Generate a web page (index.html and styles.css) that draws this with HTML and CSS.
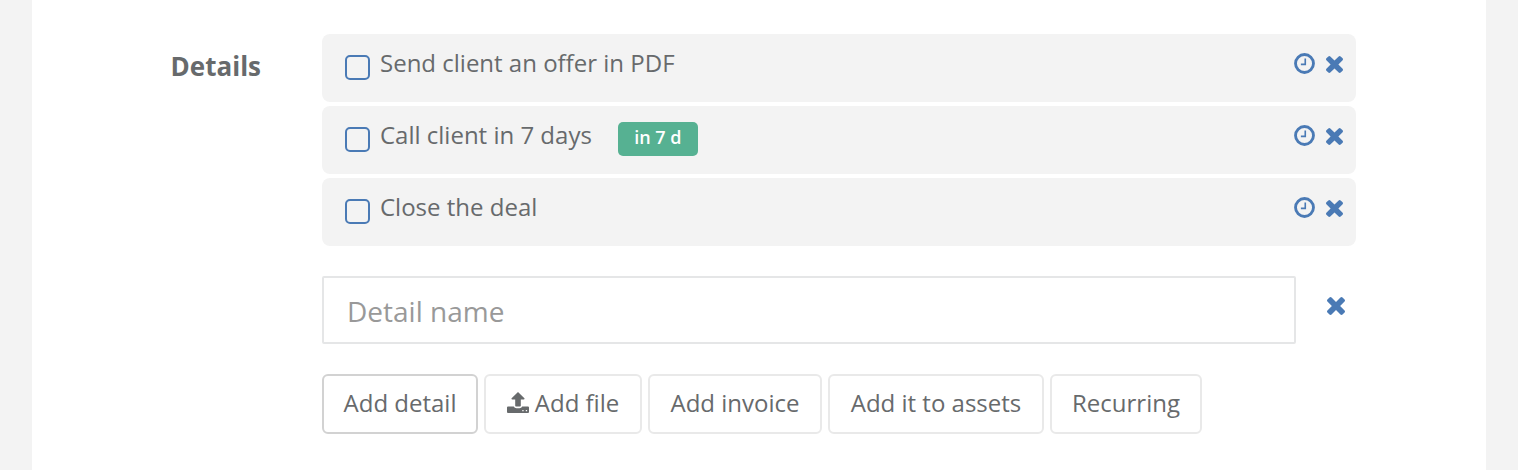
FILE: index.html
```html
<!DOCTYPE html>
<html lang="en">
<head>
    <meta charset="UTF-8">
    <title>Details</title>
    <link rel="stylesheet" href="styles.css">
</head>
<body>
    <svg class="sprite">
        <symbol id="clock" viewBox="0 0 22 22">
            <circle cx="11" cy="11" r="9.4" fill="none" stroke="currentColor" stroke-width="3"/>
            <path d="M11.8 5.800v6.100H7.200" fill="none" stroke="currentColor" stroke-width="1.700"/>
        </symbol>
        <symbol id="times" viewBox="110 -1170 1188 1188">
            <path transform="scale(1 -1)" fill="currentColor" d="M1298 214q0 -40 -28 -68l-136 -136q-28 -28 -68 -28t-68 28l-294 294l-294 -294q-28 -28 -68 -28t-68 28l-136 136q-28 28 -28 68t28 68l294 294l-294 294q-28 28 -28 68t28 68l136 136q28 28 68 28t68 -28l294 -294l294 294q28 28 68 28t68 -28l136 -136q28 -28 28 -68t-28 -68l-294 -294l294 -294q28 -28 28 -68z"/>
        </symbol>
    </svg>
    <div class="panel">
        <div class="label">Details</div>
        <div class="content">
            <ul class="tasks">
                <li class="task">
                    <span class="checkbox"></span>
                    <span class="task-text">Send client an offer in PDF</span>
                    <span class="actions">
                        <svg class="clock"><use href="#clock"/></svg>
                        <svg class="times"><use href="#times"/></svg>
                    </span>
                </li>
                <li class="task">
                    <span class="checkbox"></span>
                    <span class="task-text">Call client in 7 days</span>
                    <span class="badge">in 7 d</span>
                    <span class="actions">
                        <svg class="clock"><use href="#clock"/></svg>
                        <svg class="times"><use href="#times"/></svg>
                    </span>
                </li>
                <li class="task">
                    <span class="checkbox"></span>
                    <span class="task-text">Close the deal</span>
                    <span class="actions">
                        <svg class="clock"><use href="#clock"/></svg>
                        <svg class="times"><use href="#times"/></svg>
                    </span>
                </li>
            </ul>
            <div class="detail-row">
                <input type="text" class="detail-input" placeholder="Detail name">
                <svg class="times"><use href="#times"/></svg>
            </div>
            <div class="buttons">
                <button class="btn active">Add detail</button>
                <button class="btn file">
                    <svg class="upload" viewBox="0 0 22 21">
                        <path fill="currentColor" fill-rule="evenodd" d="M11 0l6.400 6.200q.5 1-.7 1.300H13.800v6.200q0 .8-.8.8H9q-.8 0-.8-.8V7.500H5.300q-1.200-.3-.7-1.300zM1 14.500h5.800q.7 1.700 2.700 1.700h3q2 0 2.700-1.700H21q1 0 1 1V20q0 1-1 1H1q-1 0-1-1v-4.500q0-1 1-1zM15.300 18v1.300h1.300V18zM18.800 18v1.300h1.300V18z"/>
                    </svg>Add file
                </button>
                <button class="btn invoice">Add invoice</button>
                <button class="btn assets">Add it to assets</button>
                <button class="btn recurring">Recurring</button>
            </div>
        </div>
    </div>
</body>
</html>
```
FILE: styles.css
```css
* {
    margin: 0;
    padding: 0;
    box-sizing: border-box;
}

body {
    background-color: #f3f3f3;
    color: #676a6c;
    font-family: "Open Sans", sans-serif;
    font-size: 24px;
}

.sprite {
    display: none;
}

.panel {
    display: flex;
    height: 470px;
    margin: 0 32px;
    padding-top: 34px;
    background-color: #fff;
}

.label {
    width: 290px;
    padding: 14px 61px 0 0;
    font-size: 26px;
    font-weight: 700;
    line-height: 36px;
    text-align: right;
}

.content {
    width: 1034px;
}

.tasks {
    display: flex;
    flex-direction: column;
    gap: 4px;
    list-style: none;
}

.task {
    display: flex;
    height: 68px;
    padding: 0 13px 0 23px;
    background-color: #f3f3f3;
    border-radius: 8px;
}

.checkbox {
    width: 25px;
    height: 25px;
    margin: 21px 10px 0 0;
    border: 2px solid #4a7ab5;
    border-radius: 5px;
}

.task-text {
    padding-top: 12px;
    line-height: 34px;
}

.badge {
    width: 80px;
    height: 34px;
    margin: 16px 0 0 26px;
    background-color: #56b192;
    border-radius: 5px;
    color: #fff;
    font-size: 18px;
    font-weight: 600;
    line-height: 31px;
    text-align: center;
}

.actions {
    display: flex;
    gap: 11px;
    margin-left: auto;
    padding-top: 19px;
    color: #4a7ab5;
}

.clock {
    width: 21px;
    height: 21px;
}

.times {
    width: 17px;
    height: 17px;
    margin-top: 3px;
    color: #4a7ab5;
}

.detail-row {
    display: flex;
    gap: 31px;
    margin-top: 30px;
}

.detail-row .times {
    width: 18px;
    height: 18px;
    margin-top: 21px;
}

.detail-input {
    width: 974px;
    height: 68px;
    padding: 2px 23px 0;
    border: 2px solid #e5e6e7;
    border-radius: 2px;
    font-family: inherit;
    font-size: 28px;
}

.detail-input::placeholder {
    color: #999;
}

.buttons {
    display: flex;
    gap: 6px;
    margin-top: 30px;
}

.btn {
    display: flex;
    align-items: center;
    justify-content: center;
    width: 156px;
    height: 60px;
    padding-bottom: 3px;
    background-color: #fff;
    border: 2px solid #e9e9e9;
    border-radius: 6px;
    color: inherit;
    font-family: inherit;
    font-size: 24px;
}

.btn.active {
    border-color: #d2d2d2;
}

.btn.file {
    width: 158px;
}

.btn.invoice {
    width: 174px;
}

.btn.assets {
    width: 216px;
}

.btn.recurring {
    width: 152px;
}

.upload {
    width: 22px;
    height: 21px;
    margin-right: 6px;
}
```
